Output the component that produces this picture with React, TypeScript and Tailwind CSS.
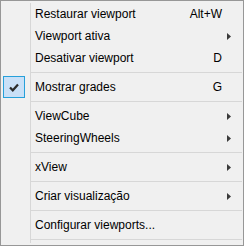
import React from "react";

type Item =
  | { type: "item"; label: string; shortcut?: string; sub?: boolean; checked?: boolean }
  | { type: "sep" };

const items: Item[] = [
  { type: "item", label: "Restaurar viewport", shortcut: "Alt+W" },
  { type: "item", label: "Viewport ativa", sub: true },
  { type: "item", label: "Desativar viewport", shortcut: "D" },
  { type: "sep" },
  { type: "item", label: "Mostrar grades", shortcut: "G", checked: true },
  { type: "sep" },
  { type: "item", label: "ViewCube", sub: true },
  { type: "item", label: "SteeringWheels", sub: true },
  { type: "sep" },
  { type: "item", label: "xView", sub: true },
  { type: "sep" },
  { type: "item", label: "Criar visualização", sub: true },
  { type: "sep" },
  { type: "item", label: "Configurar viewports..." },
  { type: "sep" },
];

function Arrow() {
  return (
    <svg width="4" height="7" viewBox="0 0 4 7" className="block">
      <path d="M0 0 L4 3.5 L0 7 Z" fill="#3a3a3a" />
    </svg>
  );
}

function Check() {
  return (
    <svg width="10" height="9" viewBox="0 0 10 9" className="block">
      <path d="M1 4.5 L3.8 7.3 L9 1.5" fill="none" stroke="#2b2b2b" strokeWidth="2.2" />
    </svg>
  );
}

export default function App() {
  return (
    <div
      className="w-[244px] h-[246px] bg-[#f0f0f0] border border-[#979797] flex flex-col py-[2px] text-[12px] text-black"
      style={{ fontFamily: '"Liberation Sans", Arial, sans-serif' }}
    >
      {items.map((it, i) =>
        it.type === "sep" ? (
          <div key={i} className="flex h-[7px]">
            <div className="w-[30px] border-r border-[#d7d7d7] shrink-0" />
            <div className="flex-1 flex items-center pr-[1px]">
              <div className="h-px w-full bg-[#d7d7d7]" />
            </div>
          </div>
        ) : (
          <div key={i} className="flex h-[22px] items-center">
            <div className="w-[30px] h-full border-r border-[#d7d7d7] shrink-0 flex items-center pl-[2px]">
              {it.checked && (
                <div className="w-[22px] h-[22px] border border-[#26a0da] bg-[#c9e0f7] flex items-center justify-center">
                  <Check />
                </div>
              )}
            </div>
            <div className="flex-1 pl-[4px] whitespace-nowrap">{it.label}</div>
            <div className="w-[40px] text-right whitespace-nowrap">{it.shortcut ?? ""}</div>
            <div className="w-[21px] pl-[5px] flex items-center">{it.sub && <Arrow />}</div>
          </div>
        )
      )}
    </div>
  );
}
